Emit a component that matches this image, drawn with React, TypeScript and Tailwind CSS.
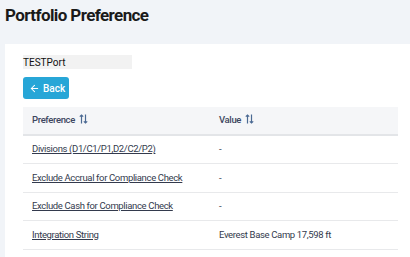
import { ArrowLeft } from "lucide-react";

const rows = [
  { pref: "Divisions (D1/C1/P1,D2/C2/P2)", value: "-" },
  { pref: "Exclude Accrual for Compliance Check", value: "-" },
  { pref: "Exclude Cash for Compliance Check", value: "-" },
  { pref: "Integration String", value: "Everest Base Camp 17,598 ft" },
];

const SortIcon = () => (
  <svg width="9" height="10" viewBox="0 0 9 10" className="ml-[4px] inline-block align-[-1px]" fill="none" stroke="#4b6a93" strokeWidth="1.2">
    <path d="M2.5 9.5V1M0.8 2.7L2.5 1L4.2 2.7" />
    <path d="M6.5 0.5V9M4.8 7.3L6.5 9L8.2 7.3" />
  </svg>
);

export default function App() {
  return (
    <div className="min-h-screen bg-[#f1f4f8] pl-[5px] pt-[3px] font-['Roboto',sans-serif]">
      <h1 className="text-[17px] font-bold leading-[24px] tracking-[-0.6px] text-[#1a1a1a]">Portfolio Preference</h1>
      <div className="mt-[17px] bg-white pl-[18px] pr-[12px] pt-[11px] pb-4">
        <div className="flex h-[14px] w-[109px] items-center bg-[#f2f2f2] text-[10px] text-[#111]">TESTPort</div>
        <button className="mt-[8px] flex h-[22px] w-[46px] items-center gap-[3px] rounded-[3px] bg-[#27a6d7] pl-[6px] text-[10px] font-medium text-white">
          <ArrowLeft size={11} strokeWidth={2.2} />
          Back
        </button>
        <table className="mt-[8px] w-full border-collapse text-[9.5px] tracking-[-0.35px]">
          <thead>
            <tr className="h-[28px] border-b-2 border-[#e3e5e8] bg-[#f5f6f8] text-left text-[#3d4660]">
              <th className="w-[196px] pl-[9px] font-medium">Preference<SortIcon /></th>
              <th className="font-medium">Value<SortIcon /></th>
            </tr>
          </thead>
          <tbody>
            {rows.map((r) => (
              <tr key={r.pref} className="h-[28.5px] border-b border-[#e8e9eb]">
                <td className="pl-[9px]"><a className="cursor-pointer text-[#333a4d] underline">{r.pref}</a></td>
                <td className="text-[#333a4d]">{r.value}</td>
              </tr>
            ))}
          </tbody>
        </table>
      </div>
    </div>
  );
}
